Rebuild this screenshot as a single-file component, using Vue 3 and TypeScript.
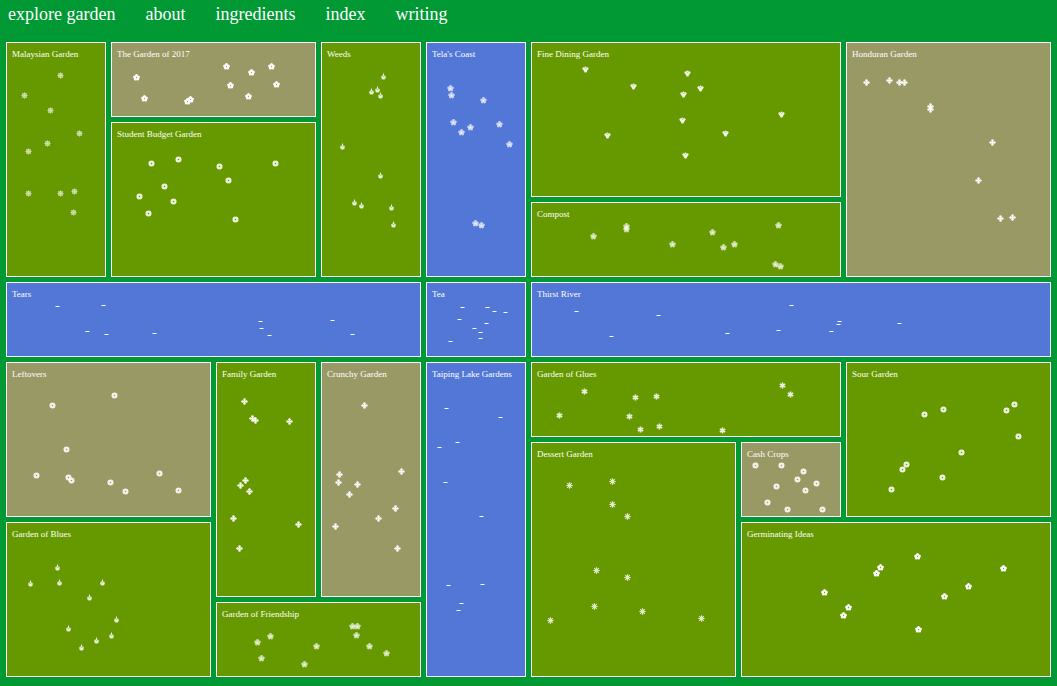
<script setup lang="ts">
type Kind = 'garden' | 'soil' | 'water'
type Species = 'burst' | 'blossom' | 'rosette' | 'bud' | 'bloom' | 'posy' | 'clover' | 'aster' | 'mum' | 'wave'
type Point = [number, number]

interface Plot {
  name: string
  kind: Kind
  species: Species
  col: number
  row: number
  cols: number
  rows: number
  plants: Point[]
}

const links: string[] = ['explore garden', 'about', 'ingredients', 'index', 'writing']

// Plants are recorded in the coordinates of the whole garden map.
const ORIGIN_X = 6
const ORIGIN_Y = 42
const STEP_X = 105
const STEP_Y = 80
const PATH = 5

const plots: Plot[] = [
  { name: 'Malaysian Garden', kind: 'garden', species: 'burst', col: 1, row: 1, cols: 1, rows: 3,
    plants: [[60, 75], [24, 95], [50, 110], [79, 133], [47, 143], [28, 151], [28, 193], [60, 193], [74, 191], [73, 212]] },
  { name: 'The Garden of 2017', kind: 'soil', species: 'blossom', col: 2, row: 1, cols: 2, rows: 1,
    plants: [[136, 77], [144, 98], [187, 101], [190, 99], [226, 66], [230, 85], [251, 72], [248, 96], [271, 66], [276, 84]] },
  { name: 'Student Budget Garden', kind: 'garden', species: 'rosette', col: 2, row: 2, cols: 2, rows: 2,
    plants: [[151, 163], [178, 159], [219, 166], [275, 163], [228, 180], [164, 186], [139, 196], [173, 201], [148, 213], [235, 219]] },
  { name: 'Weeds', kind: 'garden', species: 'bud', col: 4, row: 1, cols: 1, rows: 3,
    plants: [[383, 76], [377, 89], [371, 91], [380, 95], [342, 146], [380, 175], [354, 202], [361, 205], [391, 207], [393, 224]] },
  { name: "Tela's Coast", kind: 'water', species: 'bloom', col: 5, row: 1, cols: 1, rows: 3,
    plants: [[450, 88], [451, 95], [483, 100], [453, 122], [461, 132], [470, 127], [499, 124], [509, 144], [475, 223], [481, 225]] },
  { name: 'Fine Dining Garden', kind: 'garden', species: 'posy', col: 6, row: 1, cols: 3, rows: 2,
    plants: [[585, 69], [633, 86], [687, 73], [700, 88], [683, 94], [682, 120], [781, 114], [725, 133], [607, 135], [685, 155]] },
  { name: 'Compost', kind: 'garden', species: 'bloom', col: 6, row: 3, cols: 3, rows: 1,
    plants: [[593, 236], [626, 226], [626, 229], [672, 244], [712, 232], [723, 247], [734, 244], [778, 225], [775, 264], [780, 266]] },
  { name: 'Honduran Garden', kind: 'soil', species: 'clover', col: 9, row: 1, cols: 2, rows: 3,
    plants: [[866, 82], [889, 80], [899, 82], [904, 82], [930, 106], [930, 109], [992, 142], [978, 180], [1000, 218], [1012, 217]] },
  { name: 'Tears', kind: 'water', species: 'wave', col: 1, row: 4, cols: 4, rows: 1,
    plants: [[57, 306], [103, 305], [87, 331], [106, 334], [154, 333], [260, 321], [261, 328], [269, 335], [332, 320], [352, 334]] },
  { name: 'Tea', kind: 'water', species: 'wave', col: 5, row: 4, cols: 1, rows: 1,
    plants: [[462, 307], [487, 307], [494, 311], [505, 312], [459, 319], [486, 323], [474, 328], [480, 332], [480, 338], [450, 341]] },
  { name: 'Thirst River', kind: 'water', species: 'wave', col: 6, row: 4, cols: 5, rows: 1,
    plants: [[576, 311], [658, 315], [791, 305], [611, 336], [727, 333], [778, 330], [839, 321], [838, 324], [831, 331], [899, 323]] },
  { name: 'Leftovers', kind: 'soil', species: 'rosette', col: 1, row: 5, cols: 2, rows: 2,
    plants: [[52, 405], [114, 395], [66, 449], [36, 475], [68, 477], [71, 480], [110, 482], [125, 491], [159, 473], [178, 490]] },
  { name: 'Family Garden', kind: 'garden', species: 'clover', col: 3, row: 5, cols: 1, rows: 3,
    plants: [[244, 401], [252, 418], [255, 420], [289, 421], [245, 480], [240, 485], [249, 491], [233, 518], [298, 524], [239, 548]] },
  { name: 'Crunchy Garden', kind: 'soil', species: 'clover', col: 4, row: 5, cols: 1, rows: 3,
    plants: [[364, 405], [401, 471], [339, 474], [338, 482], [357, 484], [349, 494], [395, 508], [378, 518], [335, 526], [397, 548]] },
  { name: 'Taiping Lake Gardens', kind: 'water', species: 'wave', col: 5, row: 5, cols: 1, rows: 4,
    plants: [[446, 408], [500, 417], [457, 442], [439, 447], [445, 482], [481, 516], [448, 585], [482, 584], [461, 603], [458, 610]] },
  { name: 'Garden of Glues', kind: 'garden', species: 'aster', col: 6, row: 5, cols: 3, rows: 1,
    plants: [[584, 391], [559, 415], [635, 397], [656, 396], [629, 416], [640, 429], [659, 426], [722, 430], [782, 385], [790, 394]] },
  { name: 'Sour Garden', kind: 'garden', species: 'rosette', col: 9, row: 5, cols: 2, rows: 2,
    plants: [[924, 414], [943, 409], [1006, 410], [1014, 404], [1018, 436], [961, 452], [906, 464], [902, 469], [942, 477], [891, 489]] },
  { name: 'Dessert Garden', kind: 'garden', species: 'mum', col: 6, row: 6, cols: 2, rows: 3,
    plants: [[569, 485], [612, 481], [612, 504], [627, 516], [596, 570], [627, 577], [594, 606], [550, 620], [642, 611], [701, 618]] },
  { name: 'Cash Crops', kind: 'soil', species: 'rosette', col: 8, row: 6, cols: 1, rows: 1,
    plants: [[755, 465], [781, 465], [803, 471], [797, 479], [776, 486], [816, 483], [805, 490], [767, 502], [787, 509], [822, 509]] },
  { name: 'Garden of Blues', kind: 'garden', species: 'bud', col: 1, row: 7, cols: 2, rows: 2,
    plants: [[57, 567], [30, 583], [59, 582], [102, 582], [89, 597], [116, 619], [68, 628], [111, 635], [96, 640], [81, 647]] },
  { name: 'Germinating Ideas', kind: 'garden', species: 'blossom', col: 8, row: 7, cols: 3, rows: 2,
    plants: [[917, 556], [880, 567], [876, 573], [1003, 568], [968, 586], [824, 592], [944, 596], [848, 607], [843, 615], [918, 629]] },
  { name: 'Garden of Friendship', kind: 'garden', species: 'bloom', col: 3, row: 8, cols: 2, rows: 1,
    plants: [[257, 642], [270, 636], [261, 658], [304, 664], [316, 646], [352, 626], [357, 626], [356, 635], [369, 646], [386, 653]] },
]

// Petal centres on a circle, the first one pointing up.
const petals = (count: number, radius: number): Point[] =>
  Array.from({ length: count }, (_, i) => {
    const angle = (i / count) * Math.PI * 2 - Math.PI / 2
    return [Math.cos(angle) * radius, Math.sin(angle) * radius] as Point
  })

const area = (p: Plot) => ({
  gridColumn: `${p.col} / span ${p.cols}`,
  gridRow: `${p.row} / span ${p.rows}`,
})

const place = (p: Plot, [x, y]: Point) => {
  const left = ORIGIN_X + (p.col - 1) * STEP_X + 1
  const top = ORIGIN_Y + (p.row - 1) * STEP_Y + 1
  const width = p.cols * STEP_X - PATH - 2
  const height = p.rows * STEP_Y - PATH - 2
  return { left: `${((x - left) / width) * 100}%`, top: `${((y - top) / height) * 100}%` }
}
</script>

<template>
  <div class="page">
    <svg class="seeds" aria-hidden="true">
      <symbol id="burst" viewBox="0 0 9 9">
        <g fill="none" stroke="#fff" stroke-width="0.8" opacity="0.75">
          <path d="M4.5 1.5v6M1.5 4.5h6M2.2 2.2l4.6 4.6M6.8 2.2L2.2 6.8" />
          <circle cx="4.5" cy="4.5" r="2.2" stroke-width="0.7" />
        </g>
      </symbol>
      <symbol id="blossom" viewBox="0 0 9 9">
        <circle v-for="([x, y], i) in petals(5, 2)" :key="i" :cx="4.5 + x" :cy="4.5 + y" r="1.5" fill="#fff" />
      </symbol>
      <symbol id="rosette" viewBox="0 0 9 9">
        <circle cx="4.5" cy="4.5" r="1.9" fill="none" stroke="#fff" stroke-width="2.3" opacity="0.87" />
      </symbol>
      <symbol id="bud" viewBox="0 0 9 9">
        <g fill="#fff" opacity="0.85">
          <path d="M4 1.5h1v2.5h-1z" />
          <path d="M3.2 3h2.6v1H3.2z" opacity="0.6" />
          <path d="M2.3 3.8L4.5 4.6l2.2-.8v1.9q0 1.9-2.2 1.9t-2.2-1.9z" />
        </g>
      </symbol>
      <symbol id="bloom" viewBox="0 0 9 9">
        <g fill="#fff">
          <g opacity="0.68">
            <circle v-for="([x, y], i) in petals(5, 2)" :key="i" :cx="4.5 + x" :cy="4.5 + y" r="1.4" />
          </g>
          <circle cx="4.5" cy="4.7" r="1.1" opacity="0.9" />
        </g>
      </symbol>
      <symbol id="posy" viewBox="0 0 9 9">
        <g fill="#fff" opacity="0.9">
          <circle cx="4.5" cy="2.6" r="1" />
          <circle cx="2.7" cy="3.6" r="1.3" />
          <circle cx="6.3" cy="3.6" r="1.3" />
          <path d="M2.6 3.8h3.8v1.6L5.4 7.4H3.6l-1-2z" />
        </g>
      </symbol>
      <symbol id="clover" viewBox="0 0 9 9">
        <g fill="#fff" opacity="0.95">
          <circle v-for="([x, y], i) in petals(4, 1.9)" :key="i" :cx="4.5 + x" :cy="4.5 + y" r="1.3" />
          <path d="M4 2h1v5h-1zM2 4h5v1H2z" />
        </g>
      </symbol>
      <symbol id="aster" viewBox="0 0 9 9">
        <g opacity="0.85">
          <path d="M4.5 1.4v6.2M1.8 3l5.4 3M7.2 3L1.8 6" stroke="#fff" stroke-width="1.7" />
          <circle cx="4.5" cy="4.5" r="1.8" fill="#fff" />
        </g>
      </symbol>
      <symbol id="mum" viewBox="0 0 9 9">
        <g opacity="0.8">
          <path d="M4.5 1.3v6.4M1.3 4.5h6.4M2.2 2.2l4.6 4.6M6.8 2.2L2.2 6.8" stroke="#fff" stroke-width="1.2" />
          <circle cx="4.5" cy="4.5" r="1.8" fill="#fff" />
        </g>
      </symbol>
      <symbol id="wave" viewBox="0 0 9 9">
        <path d="M2 4h5v1H2z" fill="#fff" opacity="0.5" />
        <path d="M3 4h3v1H3z" fill="#fff" />
      </symbol>
    </svg>
    <nav class="menu">
      <a v-for="link in links" :key="link" href="#">{{ link }}</a>
    </nav>
    <main class="map">
      <a v-for="p in plots" :key="p.name" href="#" class="plot" :class="p.kind" :style="area(p)">
        <span class="name">{{ p.name }}</span>
        <svg v-for="(pt, i) in p.plants" :key="i" class="plant" aria-hidden="true" :style="place(p, pt)">
          <use :href="`#${p.species}`" />
        </svg>
      </a>
    </main>
  </div>
</template>

<style>
body {
  margin: 0;
  background: #009933;
}
</style>

<style scoped>
.page {
  color: #fff;
  font-family: "Liberation Serif", serif;
}
.seeds {
  position: absolute;
  width: 0;
  height: 0;
}
.menu {
  display: flex;
  flex-wrap: wrap;
  gap: 0 30px;
  padding: 4px 8px 18px;
  font-size: 18px;
  line-height: 20px;
}
a {
  color: inherit;
  text-decoration: none;
}
.map {
  display: grid;
  grid-template-columns: repeat(10, minmax(0, 1fr));
  grid-auto-rows: 75px;
  gap: 5px;
  padding: 0 6px 9px;
}
.plot {
  position: relative;
  box-sizing: border-box;
  border: 1px solid #fff;
  padding: 5px;
}
.garden {
  background: #669900;
}
.soil {
  background: #999966;
}
.water {
  background: #5277d6;
}
.name {
  display: block;
  font-size: 9px;
  line-height: 12px;
  white-space: nowrap;
}
.plant {
  position: absolute;
  width: 9px;
  height: 9px;
  margin: -4px;
}
</style>
